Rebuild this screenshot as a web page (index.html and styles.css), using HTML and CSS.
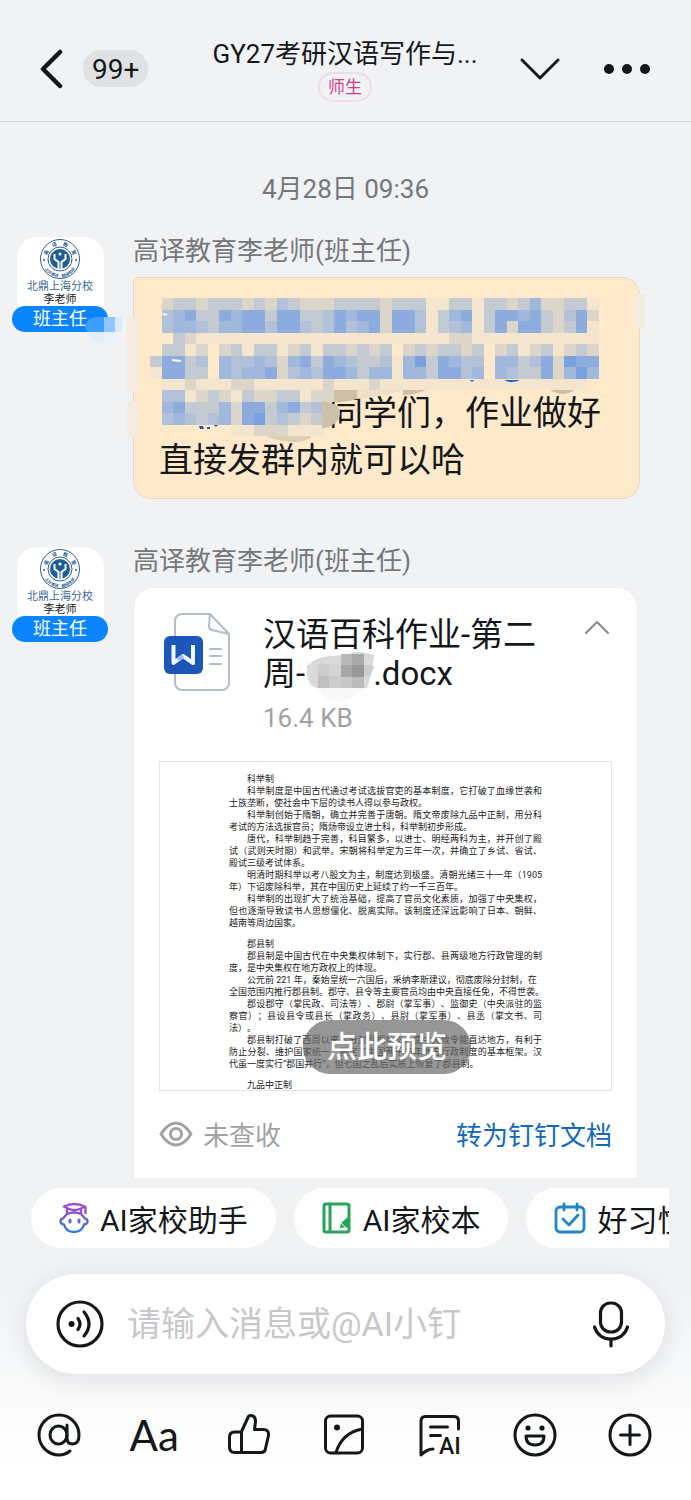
FILE: index.html
```html
<!DOCTYPE html>
<html lang="zh-CN">
<head>
    <meta charset="UTF-8">
    <meta name="viewport" content="width=device-width, initial-scale=1.0">
    <title>GY27考研汉语写作与...</title>
    <link rel="stylesheet" href="styles.css">
</head>
<body>

    <header class="topbar">
        <div class="topbar-left">
            <button class="icon-btn" aria-label="返回">
                <svg width="24" height="42" viewBox="0 0 24 42"><path d="M21 4 4 21l17 17" fill="none" stroke="#15181b" stroke-width="4.500" stroke-linecap="round" stroke-linejoin="round"/></svg>
            </button>
            <span class="unread">99+</span>
        </div>
        <div class="topbar-title">
            <h1>GY27考研汉语写作与...</h1>
            <span class="tag">师生</span>
        </div>
        <div class="topbar-right">
            <button class="icon-btn" aria-label="展开">
                <svg width="42" height="26" viewBox="0 0 42 26"><path d="m3 4 18 18L39 4" fill="none" stroke="#15181b" stroke-width="3" stroke-linecap="round" stroke-linejoin="round"/></svg>
            </button>
            <button class="icon-btn" aria-label="更多">
                <svg width="48" height="12" viewBox="0 0 48 12" fill="#15181b"><circle cx="6" cy="6" r="5"/><circle cx="24" cy="6" r="5"/><circle cx="42" cy="6" r="5"/></svg>
            </button>
        </div>
    </header>

    <main class="chat">
        <time class="chat-time">4月28日 09:36</time>

        <article class="message">
            <div class="avatar">
                <div class="avatar-card">
                    <svg class="seal" width="42" height="42" viewBox="0 0 42 42">
                        <circle cx="21" cy="21" r="19.500" fill="#fff" stroke="#2f6193"/>
                        <circle cx="21" cy="21" r="12" fill="#fff" stroke="#2f6193"/>
                        <circle cx="21" cy="21" r="10" fill="#1f5c98"/>
                        <path d="M19.500 31v-7l-4-3v-5M22.500 31v-7l4-3v-5" fill="none" stroke="#fff" stroke-width="2"/>
                        <circle cx="21" cy="16" r="1.500" fill="#fff"/>
                        <path id="arcTop" d="M7.500 21a13.500 13.500 0 0 1 27 0" fill="none"/>
                        <path id="arcBottom" d="M3.500 22a17.500 17.500 0 0 0 35 0" fill="none"/>
                        <text class="seal-text"><textPath href="#arcTop" startOffset="50%" text-anchor="middle">高　译　教　育</textPath></text>
                        <text class="seal-small"><textPath href="#arcBottom" startOffset="50%" text-anchor="middle">上外考研　翻译考研</textPath></text>
                        <circle cx="5" cy="22" r="1" fill="#2f6193"/>
                        <circle cx="37" cy="22" r="1" fill="#2f6193"/>
                    </svg>
                    <span class="avatar-school">北鼎上海分校</span>
                    <span class="avatar-name">李老师</span>
                </div>
                <span class="avatar-role">班主任</span>
            </div>
            <div class="message-body">
                <div class="sender">高译教育李老师(班主任)</div>
                <div class="bubble">
                    <svg id="mosaic" class="mosaic" width="565" height="222" viewBox="85 277 565 222" aria-hidden="true"></svg>
                    <p><span class="masked"></span>同学们，作业做好<br>直接发群内就可以哈</p>
                </div>
            </div>
        </article>

        <article class="message">
            <div class="avatar">
                <div class="avatar-card">
                    <svg class="seal" width="42" height="42" viewBox="0 0 42 42">
                        <circle cx="21" cy="21" r="19.500" fill="#fff" stroke="#2f6193"/>
                        <circle cx="21" cy="21" r="12" fill="#fff" stroke="#2f6193"/>
                        <circle cx="21" cy="21" r="10" fill="#1f5c98"/>
                        <path d="M19.500 31v-7l-4-3v-5M22.500 31v-7l4-3v-5" fill="none" stroke="#fff" stroke-width="2"/>
                        <circle cx="21" cy="16" r="1.500" fill="#fff"/>
                        <text class="seal-text"><textPath href="#arcTop" startOffset="50%" text-anchor="middle">高　译　教　育</textPath></text>
                        <text class="seal-small"><textPath href="#arcBottom" startOffset="50%" text-anchor="middle">上外考研　翻译考研</textPath></text>
                        <circle cx="5" cy="22" r="1" fill="#2f6193"/>
                        <circle cx="37" cy="22" r="1" fill="#2f6193"/>
                    </svg>
                    <span class="avatar-school">北鼎上海分校</span>
                    <span class="avatar-name">李老师</span>
                </div>
                <span class="avatar-role">班主任</span>
            </div>
            <div class="message-body">
                <div class="sender">高译教育李老师(班主任)</div>
                <div class="file-card">
                    <div class="file-head">
                        <svg class="file-icon" width="68" height="80" viewBox="0 0 68 80">
                            <path d="M18 2h28l19 20v49a7 7 0 0 1-7 7H18a7 7 0 0 1-7-7V9a7 7 0 0 1 7-7z" fill="#fff" stroke="#b4bdcd" stroke-width="2"/>
                            <path d="M46 2l-1 12a4 4 0 0 0 3 4l17 4" fill="none" stroke="#b4bdcd" stroke-width="2"/>
                            <path d="M46 37h11M46 44h11M46 52h11" stroke="#b4bdcd" stroke-width="2" stroke-linecap="round"/>
                            <rect x="0" y="24" width="39" height="38" rx="6" fill="#1b56b8"/>
                            <path d="M9.500 35v16L19 44l10 7V35" fill="none" stroke="#f1f6ff" stroke-width="4" stroke-linecap="square" stroke-linejoin="round"/>
                            <path d="m14 48 5-4" stroke="#9dbdf0" stroke-width="4"/>
                        </svg>
                        <div class="file-info">
                            <h2>汉语百科作业-第二<br>周-<svg class="name-mask" width="68" height="50" viewBox="312 652 68 50" aria-hidden="true">
                                <path d="M314 666q5-8 22-9l16-1q9-6 18-2l9 2-1 11 2 1-3 5-5 16-12 6q-5 7-18 7-15-2-15-9-7-2-9-7-6-8-4-20z" fill="#f8f8f8"/>
                                <path d="M314 666q5-8 22-9l16-1q9-6 18-2l9 2-1 11 2 1-3 5-5 16h-49q-8-2-9-7-4-7-2-16z" fill="#dadada"/>
                                <path d="M323 665h11v12h-11z" fill="#cdcdcd"/>
                                <path d="M334 665h12v12h-12z" fill="#d4d4d4"/>
                                <path d="M323 677h11v12h-11z" fill="#bfbfc0"/>
                                <path d="M334 677h12v12h-12zM369 666h9l-3 11h-6z" fill="#ccc"/>
                                <path d="M346 655h11v11h-11z" fill="#b9b9ba"/>
                                <path d="M357 655h12v11h-12z" fill="#a9a9ab"/>
                                <path d="M346 666h11v12h-11z" fill="#a6a6a8"/>
                                <path d="M357 666h12v12h-12z" fill="#98989b"/>
                                <path d="M346 678h11v11h-11z" fill="#c7c7c8"/>
                                <path d="M357 678h12v11h-12z" fill="#bbb"/>
                            </svg>.docx</h2>
                            <span class="file-size">16.4 KB</span>
                        </div>
                        <button class="icon-btn collapse" aria-label="收起">
                            <svg width="26" height="16" viewBox="0 0 26 16"><path d="M2 13 13 2l11 11" fill="none" stroke="#85888c" stroke-width="2" stroke-linecap="round" stroke-linejoin="round"/></svg>
                        </button>
                    </div>

                    <div class="preview">
                        <section>
                            <p>科举制</p>
                            <p>科举制度是中国古代通过考试选拔官吏的基本制度，它打破了血缘世袭和士族垄断，使社会中下层的读书人得以参与政权。</p>
                            <p>科举制创始于隋朝，确立并完善于唐朝。隋文帝废除九品中正制，用分科考试的方法选拔官员；隋炀帝设立进士科，科举制初步形成。</p>
                            <p>唐代，科举制趋于完善，科目繁多，以进士、明经两科为主，并开创了殿试（武则天时期）和武举。宋朝将科举定为三年一次，并确立了乡试、省试、殿试三级考试体系。</p>
                            <p>明清时期科举以考八股文为主，制度达到极盛。清朝光绪三十一年（1905年）下诏废除科举，其在中国历史上延续了约一千三百年。</p>
                            <p>科举制的出现扩大了统治基础，提高了官员文化素质，加强了中央集权，但也逐渐导致读书人思想僵化、脱离实际。该制度还深远影响了日本、朝鲜、越南等周边国家。</p>
                        </section>
                        <section>
                            <p>郡县制</p>
                            <p>郡县制是中国古代在中央集权体制下，实行郡、县两级地方行政管理的制度，是中央集权在地方政权上的体现。</p>
                            <p class="hang">公元前 221 年，秦始皇统一六国后，采纳李斯建议，彻底废除分封制，在<br>全国范围内推行郡县制。郡守、县令等主要官员均由中央直接任免，不得世袭。</p>
                            <p>郡设郡守（掌民政、司法等）、郡尉（掌军事）、监御史（中央派驻的监察官）；县设县令或县长（掌政务）、县尉（掌军事）、县丞（掌文书、司法）。</p>
                            <p>郡县制打破了西周以来的分封割据状态，使中央政令能直达地方，有利于防止分裂、维护国家统一，奠定了中国两千多年地方行政制度的基本框架。汉代虽一度实行“郡国并行”，但七国之乱后实质上恢复了郡县制。</p>
                        </section>
                        <section>
                            <p>九品中正制</p>
                        </section>
                        <button class="preview-btn">点此预览</button>
                    </div>

                    <div class="file-foot">
                        <svg width="34" height="28" viewBox="0 0 34 28" fill="none" stroke="#a0a2a4" stroke-width="3"><path d="M2 14Q9 3 17 3t15 11Q25 25 17 25T2 14z" stroke-linejoin="round"/><circle cx="17" cy="14" r="5.500"/></svg>
                        <span>未查收</span>
                        <a href="#">转为钉钉文档</a>
                    </div>
                </div>
            </div>
        </article>
    </main>

    <footer class="composer">
        <div class="chips">
            <button class="chip">
                <svg width="30" height="32" viewBox="0 0 30 32" fill="none" stroke="url(#capGrad)" stroke-width="2.400" stroke-linejoin="round" stroke-linecap="round">
                    <defs><linearGradient id="capGrad" gradientUnits="userSpaceOnUse" x1="0" y1="0" x2="0" y2="32"><stop offset="0.200" stop-color="#a04cc8"/><stop offset="0.900" stop-color="#2f7cd6"/></linearGradient></defs>
                    <path d="M5 4.500Q15-.5 26 4.500 20 8 15.500 8T5 4.500zM26.500 5v6M8 7.500V12q7-3 14 0V7.500"/>
                    <path d="M7.500 12.500 4 16.500q-2.500.5-2.500 3t3.500 3Q7 30 15 30t10-7.500q3.500-.5 3.500-3t-2.500-3l-3.500-4"/>
                    <path d="M11 18v2M20 18v2" stroke-width="3"/>
                </svg>
                AI家校助手
            </button>
            <button class="chip">
                <svg width="30" height="32" viewBox="0 0 30 32" fill="none" stroke="#27a35a" stroke-width="3" stroke-linejoin="round">
                    <rect x="2" y="2" width="25" height="28" rx="2"/>
                    <path d="M8 2v28"/>
                    <path d="m18 26 1-5 8-7v11z" fill="#27a35a" stroke="none"/>
                    <path d="m19 21 5 5" stroke="#fff" stroke-width="1"/>
                </svg>
                AI家校本
            </button>
            <button class="chip">
                <svg width="32" height="32" viewBox="0 0 32 32" fill="none" stroke="#1f86cc" stroke-width="2.800" stroke-linecap="round" stroke-linejoin="round">
                    <rect x="2" y="5" width="28" height="25" rx="4"/>
                    <path d="M10 2v6M23 2v6M9 17l6 6 9-10"/>
                </svg>
                好习惯
            </button>
        </div>

        <div class="input-bar">
            <button class="icon-btn" aria-label="语音">
                <svg width="48" height="48" viewBox="0 0 48 48" fill="none" stroke="#15181b" stroke-width="3.200" stroke-linecap="round">
                    <circle cx="24" cy="24" r="22"/>
                    <circle cx="15.500" cy="24" r="3" fill="#15181b" stroke="none"/>
                    <path d="M22 18.500q4 5.500 0 11M28 12q10 12 0 24"/>
                </svg>
            </button>
            <input type="text" placeholder="请输入消息或@AI小钉" aria-label="消息">
            <button class="icon-btn" aria-label="按住说话">
                <svg width="38" height="48" viewBox="0 0 38 48" fill="none" stroke="#15181b" stroke-width="3.200" stroke-linecap="round">
                    <rect x="8.500" y="3" width="21" height="29" rx="10"/>
                    <path d="M2.500 27q4 12 16.500 12t16.500-12M19 40v6"/>
                </svg>
            </button>
        </div>

        <nav class="tools">
            <button class="icon-btn" aria-label="提及">
                <svg class="tool" viewBox="0 0 48 48">
                    <ellipse cx="23.500" cy="24" rx="8.500" ry="9"/>
                    <path d="M32 14v13q0 6 5.500 6 6.500 0 6.500-9a20 20 0 1 0-20 20q6 0 11-4"/>
                </svg>
            </button>
            <button class="icon-btn" aria-label="文字格式"><span class="tool-aa">Aa</span></button>
            <button class="icon-btn" aria-label="点赞">
                <svg class="tool" viewBox="0 0 48 48"><path d="M16.500 21H9.500q-5 0-5 5v10q0 5.500 5 5.500h26.500q4 0 4.500-4l3-13q.5-6-5-6H29.500l1-8q0-6-5-6-2 0-2.500 2l-6.500 14v20"/></svg>
            </button>
            <button class="icon-btn" aria-label="图片">
                <svg class="tool" viewBox="0 0 48 48"><rect x="5.500" y="5" width="37" height="37" rx="5"/><path d="M16 41.500Q22 22 42 18"/><circle cx="17" cy="16.500" r="3" class="dot"/></svg>
            </button>
            <button class="icon-btn" aria-label="AI 写作">
                <svg class="tool" viewBox="0 0 48 48"><path d="M42.500 18v-8q0-4.500-4.500-4.500H9.500Q5 5.500 5 10v34q6-6 12-6M14.500 16h17M14.500 24.500h10"/><text x="23" y="43">AI</text></svg>
            </button>
            <button class="icon-btn" aria-label="表情">
                <svg class="tool" viewBox="0 0 48 48"><circle cx="24" cy="24" r="20"/><path d="M15 25h18q0 9-9 9t-9-9z"/><circle cx="17" cy="17" r="2.600" class="dot"/><circle cx="31" cy="17" r="2.600" class="dot"/></svg>
            </button>
            <button class="icon-btn" aria-label="更多功能">
                <svg class="tool" viewBox="0 0 48 48"><circle cx="24" cy="24" r="20"/><path d="M24 14.500v19M14.500 24h19"/></svg>
            </button>
        </nav>
    </footer>

    <script>
        // masked names: one letter per cell, each row is a line of cells
        const colors = {
            a: '#f4e5cf', b: '#dcd6ca', c: '#c3cad2', d: '#b2c1d7',
            e: '#a0b8dc', f: '#8dacdd', g: '#7aa1de', h: '#cdbfa8'
        };
        const rows = [
            '.bccbcccbcbdcbbbccccbcccaaccaccbcebbcca',
            '.defccfeffcffccdfeffbffdacefacffefcbdfb',
            '.deedceeffdffdcdfdefbffdacdeacfbffcbcfa',
            '..cbaaaaaaaaaaaaaaaaaaaaaabbaaaaaaaaaaa',
            '.ccab.bcaccabcaccbcbc.bcbccbc.bcabcabcb',
            'cffcd.eddedbefcfedccdaegcfedd.eecdfbgff',
            'affcc.edeefbdedffeceeaeecffde.edccfbege',
            '.aabaaabbaaaaaabaaabaaaaaaaaaaaaaaaaaa.',
            '.ddabcbacbbccabb',
            '.efcccebffcefcd',
            '.dedcdebfgcdcbc',
            '.......aabbbaaa'
        ];
        const size = 11.5;
        let cells = `
            <path d="M85 326q2-9 15-9h4v15H87z" fill="#3f9efc"/>
            <path d="M87 332h17v11q-13 0-17-11z" fill="#e0eefb"/>
            <path d="M104 317h11v15h-11z" fill="#8fc6fd"/>
            <path d="M115 317h7v15h-7z" fill="#dcebf9"/>
            <path d="M104 332h11v10h-11z" fill="#e8f3fd"/>
            <rect x="127" y="316" width="12" height="76" rx="4" fill="#f3ebde"/>
            <rect x="127" y="401" width="12" height="36" rx="4" fill="#f3ebde"/>
            <rect x="634" y="294" width="11" height="35" rx="2" fill="#f3ebde"/>`;
        rows.forEach((row, y) => {
            [...row].forEach((cell, x) => {
                if (cell === '.') return;
                cells += `<rect x="${150 + x * size}" y="${298 + y * size}" width="${size}" height="${size}" fill="${colors[cell]}" shape-rendering="crispEdges"/>`;
            });
        });
        cells += `
            <path d="M334 390h23v9q-12 4-23 3zM403 390h23q-11 5-23 5zM550 390h24q-10 8-24 0z" fill="#cdbfa8"/>
            <path d="M357 390h46q-20 7-46 9z" fill="#efdfc8"/>
            <path d="M322 401q18 2 18 12t-14 15h-4z" fill="#cdbfa8"/>
            <path d="M265 436h46v2q-10 5-20 4-16-2-26-6z" fill="#dccdb5"/>
            <path d="M199 426h4l1 3h-4zM207 427h3v2h-3zM214 425h4l-2 2z" fill="#2456a5"/>
            <path d="M504 380q8 4 16 0zM470 380h4l-2 2z" fill="#1e62c4"/>
            <path d="M161 313l7 1-3 2zM172 359l9 1v2l-9-1z" fill="#fff"/>`;
        document.getElementById('mosaic').innerHTML = cells;
    </script>
</body>
</html>
```
FILE: styles.css
```css
* {
    box-sizing: border-box;
}

body {
    margin: 0;
    min-height: 100vh;
    display: flex;
    flex-direction: column;
    background: #f0f2f4;
    color: #15181b;
    font-family: Roboto, "Noto Sans CJK SC", sans-serif;
}

h1, h2, p {
    margin: 0;
    font-weight: 400;
}

button {
    border: 0;
    padding: 0;
    background: none;
    color: inherit;
    font-family: inherit;
}

svg {
    display: block;
    flex-shrink: 0;
}

.icon-btn {
    display: flex;
    align-items: center;
    justify-content: center;
}

/* top bar */
.topbar {
    display: grid;
    grid-template-columns: 1fr auto 1fr;
    align-items: center;
    height: 122px;
    padding: 16px 40px 0 39px;
    border-bottom: 1px solid #d6d8db;
}

.topbar-left {
    display: flex;
    align-items: center;
    gap: 20px;
}

.unread {
    padding: 2px 9px 0;
    border-radius: 18px;
    background: #dfe1e3;
    font-size: 28px;
    line-height: 35px;
}

.topbar-title {
    display: flex;
    flex-direction: column;
    align-items: center;
    gap: 1px;
    padding-top: 2px;
}

.topbar-title h1 {
    font-size: 26px;
    line-height: 34px;
}

.tag {
    padding: 0 8px;
    border: 2px solid #f0dbe5;
    border-radius: 15px;
    color: #cf3f92;
    font-size: 17px;
    line-height: 26px;
}

.topbar-right {
    display: flex;
    align-items: center;
    justify-content: flex-end;
    gap: 42px;
}

/* messages */
.chat {
    flex: 1;
    display: flex;
    flex-direction: column;
    gap: 48px;
    padding: 52px 51px 0 12px;
}

.chat-time {
    align-self: center;
    margin: 0 0 -16px 39px;
    color: #74777a;
    font-size: 26px;
    line-height: 31px;
}

.message {
    display: flex;
    gap: 25px;
}

.avatar {
    width: 96px;
    flex-shrink: 0;
    display: flex;
    flex-direction: column;
    align-items: center;
}

.avatar-card {
    width: 87px;
    height: 69px;
    display: flex;
    flex-direction: column;
    align-items: center;
    padding-top: 1px;
    border-radius: 20px 20px 0 0;
    background: #fff;
    font-size: 11px;
    line-height: 13px;
}

.seal-text {
    fill: #2f6193;
    font-size: 5px;
    font-weight: 700;
}

.seal-small {
    fill: #2f6193;
    font-size: 4px;
    font-weight: 700;
}

.avatar-school {
    color: #3a6a99;
}

.avatar-role {
    align-self: stretch;
    border-radius: 13px;
    background: #0a85ff;
    color: #fff;
    font-size: 18px;
    line-height: 26px;
    text-align: center;
}

.message-body {
    flex: 1;
    min-width: 0;
}

.sender {
    margin-bottom: 12px;
    color: #75787b;
    font-size: 26px;
    line-height: 28px;
}

.bubble {
    position: relative;
    padding: 112px 24px 14px 25px;
    border: 1px solid #e6d9c3;
    border-radius: 4px 18px 18px 18px;
    background: #fee9cb;
    font-size: 34px;
    line-height: 47px;
}

.masked {
    display: inline-block;
    width: 170px;
}

.mosaic {
    position: absolute;
    top: -1px;
    left: -49px;
}

/* file card */
.file-card {
    margin-right: 2px;
    padding: 24px 25px 0;
    border: 1px solid #e9ebed;
    border-bottom: 0;
    border-radius: 20px 20px 0 0;
    background: #fff;
}

.file-head {
    display: flex;
    height: 149px;
}

.file-icon {
    margin-left: 5px;
}

.file-info {
    flex: 1;
    padding: 3px 0 0 31px;
}

.file-info h2 {
    font-size: 33px;
    line-height: 39px;
    white-space: nowrap;
}

.name-mask {
    display: inline-block;
    margin: -12px -2px -12px 2px;
    vertical-align: middle;
}

.file-size {
    display: block;
    margin-top: 9px;
    color: #a0a2a4;
    font-size: 26px;
    line-height: 32px;
}

.collapse {
    align-self: flex-start;
    margin: 8px 2px 0 0;
}

.preview {
    position: relative;
    height: 330px;
    overflow: hidden;
    padding: 11px 69px 0;
    border: 1px solid #e4e5e6;
    color: #222;
    font-size: 9px;
    line-height: 12px;
    text-align: justify;
    text-spacing-trim: space-all;
}

.preview section {
    margin-bottom: 9px;
}

.preview p {
    text-indent: 2em;
}

.preview .hang {
    margin-right: -3px;
}

.preview-btn {
    position: absolute;
    left: 143px;
    bottom: 16px;
    padding: 0 24px;
    border-radius: 27px;
    background: rgba(105, 105, 105, 0.7);
    color: #fff;
    font-size: 30px;
    font-weight: 500;
    line-height: 54px;
}

.file-foot {
    display: flex;
    align-items: center;
    gap: 10px;
    height: 87px;
    padding-bottom: 2px;
    color: #a0a2a4;
    font-size: 26px;
}

.file-foot a {
    margin-left: auto;
    color: #1268bd;
    text-decoration: none;
}

/* composer */
.composer {
    padding-top: 9px;
    background: linear-gradient(#f0f2f4 30%, #fff 90%);
}

.chips {
    display: flex;
    gap: 18px;
    overflow: hidden;
    margin: 0 22px 26px 31px;
}

.chip {
    flex-shrink: 0;
    display: flex;
    align-items: center;
    gap: 11px;
    height: 60px;
    padding: 0 28px;
    border-radius: 30px;
    background: #fff;
    font-size: 30px;
}

.input-bar {
    display: flex;
    align-items: center;
    gap: 23px;
    height: 100px;
    margin: 0 26px;
    padding: 0 35px 0 30px;
    border-radius: 50px;
    background: #fff;
    box-shadow: 0 6px 24px rgba(30, 40, 60, 0.12);
}

.input-bar input {
    flex: 1;
    min-width: 0;
    padding: 0;
    border: 0;
    outline: 0;
    background: none;
    font-family: inherit;
    font-size: 34px;
}

.input-bar input::placeholder {
    color: #c6c8ca;
}

.tools {
    display: flex;
    justify-content: space-between;
    padding: 37px 37px 41px 35px;
}

.tools .icon-btn {
    width: 48px;
    height: 48px;
}

.tool {
    width: 48px;
    height: 48px;
    fill: none;
    stroke: #15181b;
    stroke-width: 3;
    stroke-linecap: round;
    stroke-linejoin: round;
}

.tool .dot {
    fill: #15181b;
    stroke: none;
}

.tool text {
    fill: #15181b;
    stroke: none;
    font-size: 23px;
    font-weight: 500;
}

.tool-aa {
    font-family: Lato, sans-serif;
    font-size: 42px;
    line-height: 46px;
}
```
